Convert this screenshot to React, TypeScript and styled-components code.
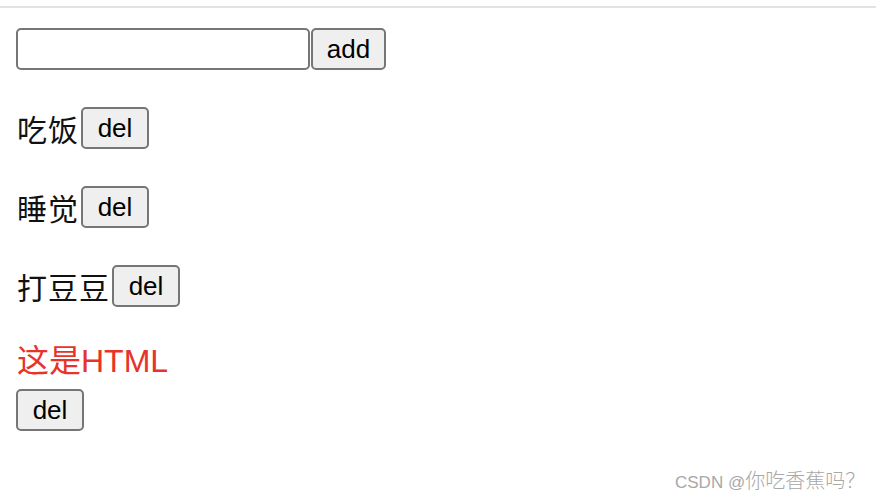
import React from "react";
import styled, { createGlobalStyle } from "styled-components";

const GlobalStyle = createGlobalStyle`
  body {
    margin: 0;
    background: #ffffff;
    font-family: "Liberation Sans", "Noto Sans CJK SC", sans-serif;
  }
`;

const Page = styled.div`
  position: relative;
  width: 876px;
  height: 502px;
  overflow: hidden;
`;

const TopRule = styled.div`
  margin-top: 6px;
  height: 2px;
  background: #e2e2e2;
`;

const Content = styled.div`
  display: flex;
  flex-direction: column;
  align-items: flex-start;
  padding: 20px 16px 0;
`;

const Row = styled.div<{ $gap?: number }>`
  display: flex;
  align-items: center;
  height: 42px;
  margin-bottom: ${(p) => p.$gap ?? 37}px;
`;

const TextInput = styled.input`
  box-sizing: border-box;
  width: 294px;
  height: 42px;
  margin: 0 1px 0 0;
  border: 2px solid #767676;
  border-radius: 5px;
  background: #fff;
`;

const Button = styled.button<{ $w: number }>`
  box-sizing: border-box;
  width: ${(p) => p.$w}px;
  height: 42px;
  margin: 0;
  padding: 0;
  border: 2px solid #767676;
  border-radius: 5px;
  background: #efefef;
  color: #000;
  font-family: "Liberation Sans", Arial, sans-serif;
  font-size: 26px;
`;

const ItemText = styled.span`
  font-family: "Noto Sans CJK SC", sans-serif;
  font-size: 30px;
  color: #111;
  margin: 0 2px 0 1px;
  letter-spacing: 1px;
`;

const HtmlText = styled.div`
  height: 38px;
  line-height: 38px;
  margin: -2px 0 9px 1px;
  font-size: 32px;
  color: #e8332a;
  font-family: "Liberation Sans", "Noto Sans CJK SC", sans-serif;
`;

const Watermark = styled.div`
  position: absolute;
  left: 675px;
  bottom: 7px;
  font-size: 17px;
  line-height: 24px;
  color: #a8a8a8;
  font-family: "Liberation Sans", sans-serif;
  white-space: nowrap;
`;

const WatermarkCjk = styled.span`
  font-family: "Noto Sans CJK SC", sans-serif;
  font-size: 20px;
  font-weight: 300;
`;

const items = ["吃饭", "睡觉", "打豆豆"];

export default function App() {
  return (
    <Page>
      <GlobalStyle />
      <TopRule />
      <Content>
        <Row $gap={37}>
          <TextInput />
          <Button $w={75}>add</Button>
        </Row>
        {items.map((t) => (
          <Row key={t}>
            <ItemText>{t}</ItemText>
            <Button $w={68}>del</Button>
          </Row>
        ))}
        <HtmlText>这是HTML</HtmlText>
        <Button $w={68}>del</Button>
      </Content>
      <Watermark>
        CSDN @<WatermarkCjk>你吃香蕉吗？</WatermarkCjk>
      </Watermark>
    </Page>
  );
}
